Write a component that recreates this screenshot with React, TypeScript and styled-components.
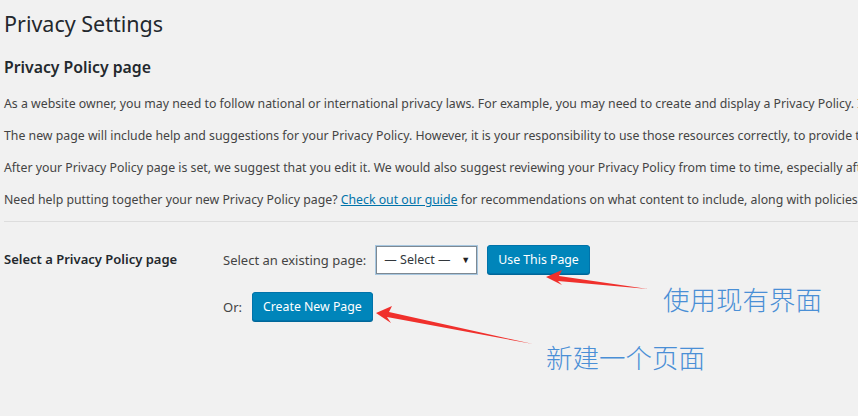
import React from "react";
import styled, { createGlobalStyle } from "styled-components";

const Global = createGlobalStyle`
  html, body { margin: 0; padding: 0; background: #f1f1f1; overflow: hidden; }
  body { font-family: "Noto Sans", "Open Sans", sans-serif; color: #444; }
`;

const Page = styled.div`
  position: relative;
  width: 858px;
  height: 416px;
  padding: 9px 0 0 4px;
  box-sizing: border-box;
  overflow: hidden;
`;

const Title = styled.h1`
  margin: 0;
  font-size: 21.5px;
  font-weight: 400;
  line-height: 29px;
  color: #23282d;
`;

const SubTitle = styled.h2`
  margin: 17px 0 0;
  font-size: 15.8px;
  font-weight: 600;
  line-height: 24px;
  color: #23282d;
`;

const Para = styled.p`
  margin: 15px 0 0;
  font-size: 12.3px;
  line-height: 20px;
  white-space: nowrap;
  & + & { margin-top: 12px; }
`;

const Link = styled.a`
  color: #0073aa;
  text-decoration: underline;
`;

const Divider = styled.hr`
  margin: 11px 0 0;
  border: 0;
  border-top: 1px solid #ddd;
`;

const FormRow = styled.div`
  display: grid;
  grid-template-columns: 210px 1fr;
  padding-top: 23px;
`;

const Label = styled.div`
  font-size: 13px;
  font-weight: 600;
  color: #23282d;
  line-height: 28px;
`;

const Field = styled.div`
  display: flex;
  flex-direction: column;
  gap: 18px;
  padding-left: 9px;
`;

const Line = styled.div`
  display: flex;
  align-items: center;
  font-size: 13px;
  gap: 10px;
`;

const SelectBox = styled.div`
  box-sizing: border-box;
  width: 101px;
  height: 28px;
  border: 1px solid #7e8993;
  box-shadow: 0 0 0 1px #a7c7e0;
  background: #fff;
  display: flex;
  align-items: center;
  justify-content: space-between;
  padding: 0 6px 0 7px;
  color: #32373c;
  font-size: 12.5px;
`;

const Caret = styled.span`
  font-size: 9px;
  color: #222;
`;

const Button = styled.button`
  box-sizing: border-box;
  height: 29px;
  padding: 0 10px;
  background: #0085ba;
  border: 1px solid #0073aa;
  border-radius: 3px;
  box-shadow: 0 1px 0 #006799;
  color: #fff;
  font-family: inherit;
  font-size: 12.3px;
  line-height: 26px;
`;

const Note = styled.div<{ $top: number; $left: number }>`
  position: absolute;
  top: ${(p) => p.$top}px;
  left: ${(p) => p.$left}px;
  font-family: "Noto Sans CJK SC", sans-serif;
  font-size: 26.5px;
  color: #4a8fd6;
  line-height: 32px;
  font-weight: 300;
`;

const Overlay = styled.svg`
  position: absolute;
  left: 0;
  top: 0;
  pointer-events: none;
`;

export default function App() {
  return (
    <>
      <Global />
      <Page>
        <Title>Privacy Settings</Title>
        <SubTitle>Privacy Policy page</SubTitle>
        <Para>As a website owner, you may need to follow national or international privacy laws. For example, you may need to create and display a Privacy Policy. If you already have a Privacy Policy page, please select it below.</Para>
        <Para>The new page will include help and suggestions for your Privacy Policy. However, it is your responsibility to use those resources correctly, to provide the information that your Privacy Policy requires.</Para>
        <Para>After your Privacy Policy page is set, we suggest that you edit it. We would also suggest reviewing your Privacy Policy from time to time, especially after installing or updating any themes or plugins.</Para>
        <Para>Need help putting together your new Privacy Policy page? <Link href="#">Check out our guide</Link> for recommendations on what content to include, along with policies suggested by your plugins and theme.</Para>
        <Divider />
        <FormRow>
          <Label>Select a Privacy Policy page</Label>
          <Field>
            <Line>
              <span>Select an existing page:</span>
              <SelectBox>
                <span>— Select —</span>
                <Caret>▼</Caret>
              </SelectBox>
              <Button>Use This Page</Button>
            </Line>
            <Line>
              <span>Or:</span>
              <Button>Create New Page</Button>
            </Line>
          </Field>
        </FormRow>
        <Note $top={283} $left={663}>使用现有界面</Note>
        <Note $top={341} $left={546}>新建一个页面</Note>
        <Overlay width={858} height={416} viewBox="0 0 858 416">
          <polygon points="546,277 562,270 559,276 648,289 558,281 562,285" fill="#f0302c" />
          <polygon points="376,313 392,306 389,312 533,344 387,317 391,323" fill="#f0302c" />
        </Overlay>
      </Page>
    </>
  );
}
